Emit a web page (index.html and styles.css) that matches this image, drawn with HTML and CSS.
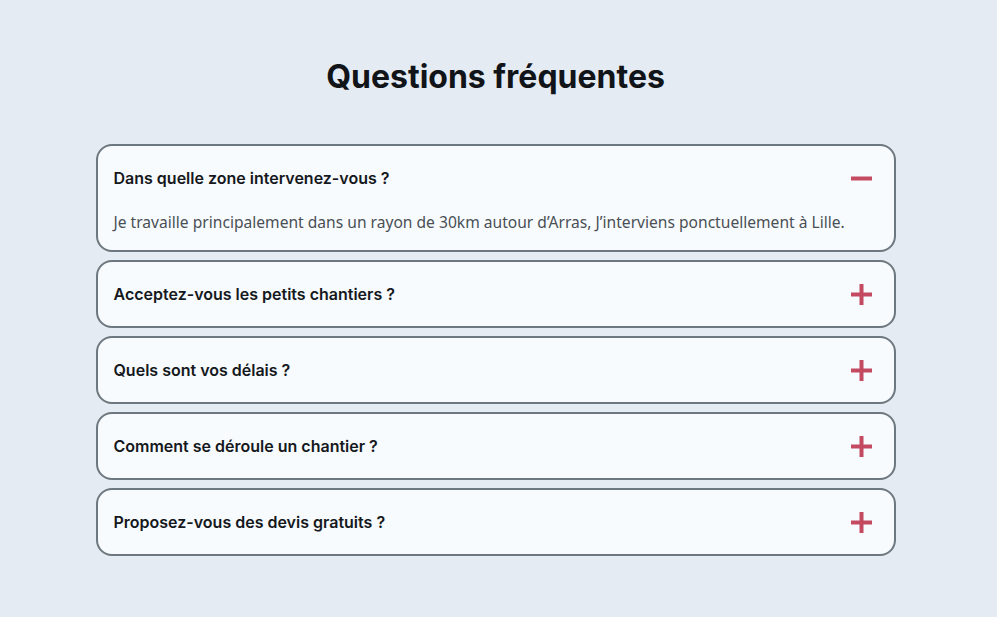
FILE: index.html
```html
<!DOCTYPE html>
<html lang="fr">
<head>
<meta charset="utf-8">
<title>FAQ</title>
<link rel="stylesheet" href="styles.css">
</head>
<body>
<section class="faq">
  <h2 class="faq-title">Questions fréquentes</h2>
  <div class="faq-list">
    <div class="faq-item open">
      <div class="faq-q">
        <span>Dans quelle zone intervenez-vous ?</span>
        <svg class="icon" viewBox="0 0 21 21"><path d="M0 10.5h21"/></svg>
      </div>
      <p class="faq-a">Je travaille principalement dans un rayon de 30km autour d’Arras, J’interviens ponctuellement à Lille.</p>
    </div>
    <div class="faq-item">
      <div class="faq-q">
        <span>Acceptez-vous les petits chantiers ?</span>
        <svg class="icon" viewBox="0 0 21 21"><path d="M0 10.5h21M10.5 0v21"/></svg>
      </div>
    </div>
    <div class="faq-item">
      <div class="faq-q">
        <span>Quels sont vos délais ?</span>
        <svg class="icon" viewBox="0 0 21 21"><path d="M0 10.5h21M10.5 0v21"/></svg>
      </div>
    </div>
    <div class="faq-item">
      <div class="faq-q">
        <span>Comment se déroule un chantier ?</span>
        <svg class="icon" viewBox="0 0 21 21"><path d="M0 10.5h21M10.5 0v21"/></svg>
      </div>
    </div>
    <div class="faq-item">
      <div class="faq-q">
        <span>Proposez-vous des devis gratuits ?</span>
        <svg class="icon" viewBox="0 0 21 21"><path d="M0 10.5h21M10.5 0v21"/></svg>
      </div>
    </div>
  </div>
</section>
</body>
</html>
```

FILE: styles.css
```css
html, body {
  margin: 0;
  padding: 0;
  background: #e5ebf2;
}
body {
  font-family: Inter, "Noto Sans", sans-serif;
  color: #111418;
}
.faq {
  width: 991px;
  padding: 57px 0 0;
  display: flex;
  flex-direction: column;
  align-items: center;
}
.faq-title {
  margin: 0 0 47px;
  font-size: 32px;
  line-height: 40px;
  font-weight: 700;
  color: #111418;
}
.faq-list {
  width: 800px;
  display: flex;
  flex-direction: column;
  gap: 8px;
}
.faq-item {
  box-sizing: border-box;
  border: 2px solid #6d777f;
  border-radius: 16px;
  background: #f7fbfe;
  padding: 0 22px 0 16px;
}
.faq-q {
  height: 64px;
  display: flex;
  align-items: center;
  justify-content: space-between;
  font-size: 16px;
  font-weight: 600;
  color: #15181c;
}
.icon {
  flex: none;
  width: 21px;
  height: 21px;
  fill: none;
  stroke: #c34a60;
  stroke-width: 4;
}
.faq-a {
  margin: 0;
  padding: 0 0 16px;
  font-family: "Noto Sans", sans-serif;
  font-size: 15.6px;
  line-height: 24px;
  color: #4a4f55;
}
```
